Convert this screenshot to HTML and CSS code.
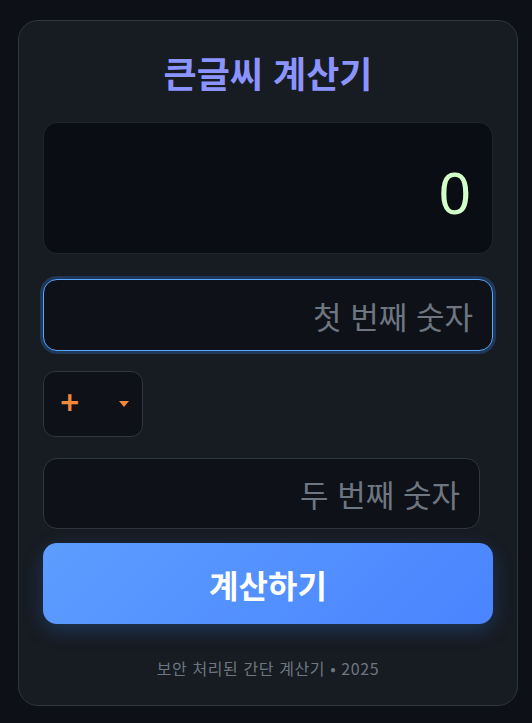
FILE: index.html
```html
<!DOCTYPE html>
<html lang="ko">
<head>
    <meta charset="UTF-8">
    <meta name="viewport" content="width=device-width, initial-scale=1.0">
    <title>큰글씨 계산기</title>
    <link rel="stylesheet" href="styles.css">
</head>
<body>

<div class="calculator">
    <h1 class="title">큰글씨 계산기</h1>

    <div class="display" id="result">0</div>

    <input type="text" class="num-input focused" id="num1" placeholder="첫 번째 숫자" autofocus>

    <div class="select-wrap">
        <select id="operator" class="operator">
            <option value="+">+</option>
            <option value="-">-</option>
            <option value="*">×</option>
            <option value="/">÷</option>
        </select>
        <svg class="select-arrow" width="10" height="6" viewBox="0 0 10 6">
            <path d="M0 0 L10 0 L5 6 Z" fill="#f0883e"/>
        </svg>
    </div>

    <input type="text" class="num-input second" id="num2" placeholder="두 번째 숫자">

    <button class="calc-btn" onclick="calculate()">계산하기</button>

    <div class="footer">보안 처리된 간단 계산기 • 2025</div>
</div>

<script>
    function calculate() {
        const a = parseFloat(document.getElementById('num1').value);
        const b = parseFloat(document.getElementById('num2').value);
        const op = document.getElementById('operator').value;
        const result = document.getElementById('result');

        if (isNaN(a) || isNaN(b)) {
            result.textContent = '0';
            return;
        }

        let value = 0;
        if (op === '+') value = a + b;
        if (op === '-') value = a - b;
        if (op === '*') value = a * b;
        if (op === '/') value = b === 0 ? 0 : a / b;

        result.textContent = value;
    }
</script>

</body>
</html>
```

FILE: styles.css
```css
body {
    background-color: #0d1117;
    font-family: "Noto Sans CJK KR", "Noto Sans", sans-serif;
    margin: 0;
    padding: 20px 0 0 18px;
}

.calculator {
    width: 500px;
    box-sizing: border-box;
    background-color: #171b22;
    border: 1px solid #30363d;
    border-radius: 20px;
    padding: 30px 24px 26px 24px;
    display: flex;
    flex-direction: column;
}

.title {
    margin: 0 0 29px 0;
    text-align: center;
    font-size: 36px;
    line-height: 42px;
    font-weight: 700;
    color: #8b93ff;
}

.display {
    height: 132px;
    box-sizing: border-box;
    background-color: #0a0d13;
    border: 1px solid #21262d;
    border-radius: 14px;
    padding: 8px 21px 0 21px;
    display: flex;
    align-items: center;
    justify-content: flex-end;
    font-family: "Noto Sans", sans-serif;
    font-size: 57px;
    color: #d2ffc7;
}

.num-input {
    height: 72px;
    box-sizing: border-box;
    background-color: #0e1117;
    border: 1px solid #30363d;
    border-radius: 14px;
    padding: 0 19px;
    text-align: right;
    font-family: "Noto Sans CJK KR", sans-serif;
    font-size: 31px;
    color: #e6edf3;
    caret-color: #ffffff;
    outline: none;
}

.num-input::placeholder {
    color: #6e7681;
}

.num-input.focused {
    margin-top: 25px;
    border: 1px solid #58a6ff;
    box-shadow: 0 0 0 3px rgba(56, 139, 253, 0.25);
}

.num-input.second {
    width: 437px;
    height: 71px;
    margin-top: 21px;
}

.select-wrap {
    position: relative;
    width: 100px;
    margin-top: 20px;
}

.operator {
    appearance: none;
    -webkit-appearance: none;
    width: 100px;
    height: 66px;
    box-sizing: border-box;
    background-color: #0e1117;
    border: 1px solid #30363d;
    border-radius: 12px;
    padding: 0 0 4px 16px;
    font-family: "Noto Sans", sans-serif;
    font-size: 34px;
    font-weight: 600;
    color: #f0883e;
    outline: none;
}

.select-arrow {
    position: absolute;
    right: 14px;
    top: 30px;
    pointer-events: none;
}

.calc-btn {
    margin-top: 14px;
    height: 81px;
    border: none;
    border-radius: 14px;
    background: linear-gradient(135deg, #5c9dff, #4a84ff);
    box-shadow: 0 6px 20px rgba(56, 139, 253, 0.25);
    color: white;
    font-family: "Noto Sans CJK KR", sans-serif;
    font-size: 32px;
    font-weight: 700;
    cursor: pointer;
}

.footer {
    margin-top: 33px;
    text-align: center;
    font-size: 16px;
    line-height: 22px;
    letter-spacing: 0.6px;
    color: #6e7681;
}
```
